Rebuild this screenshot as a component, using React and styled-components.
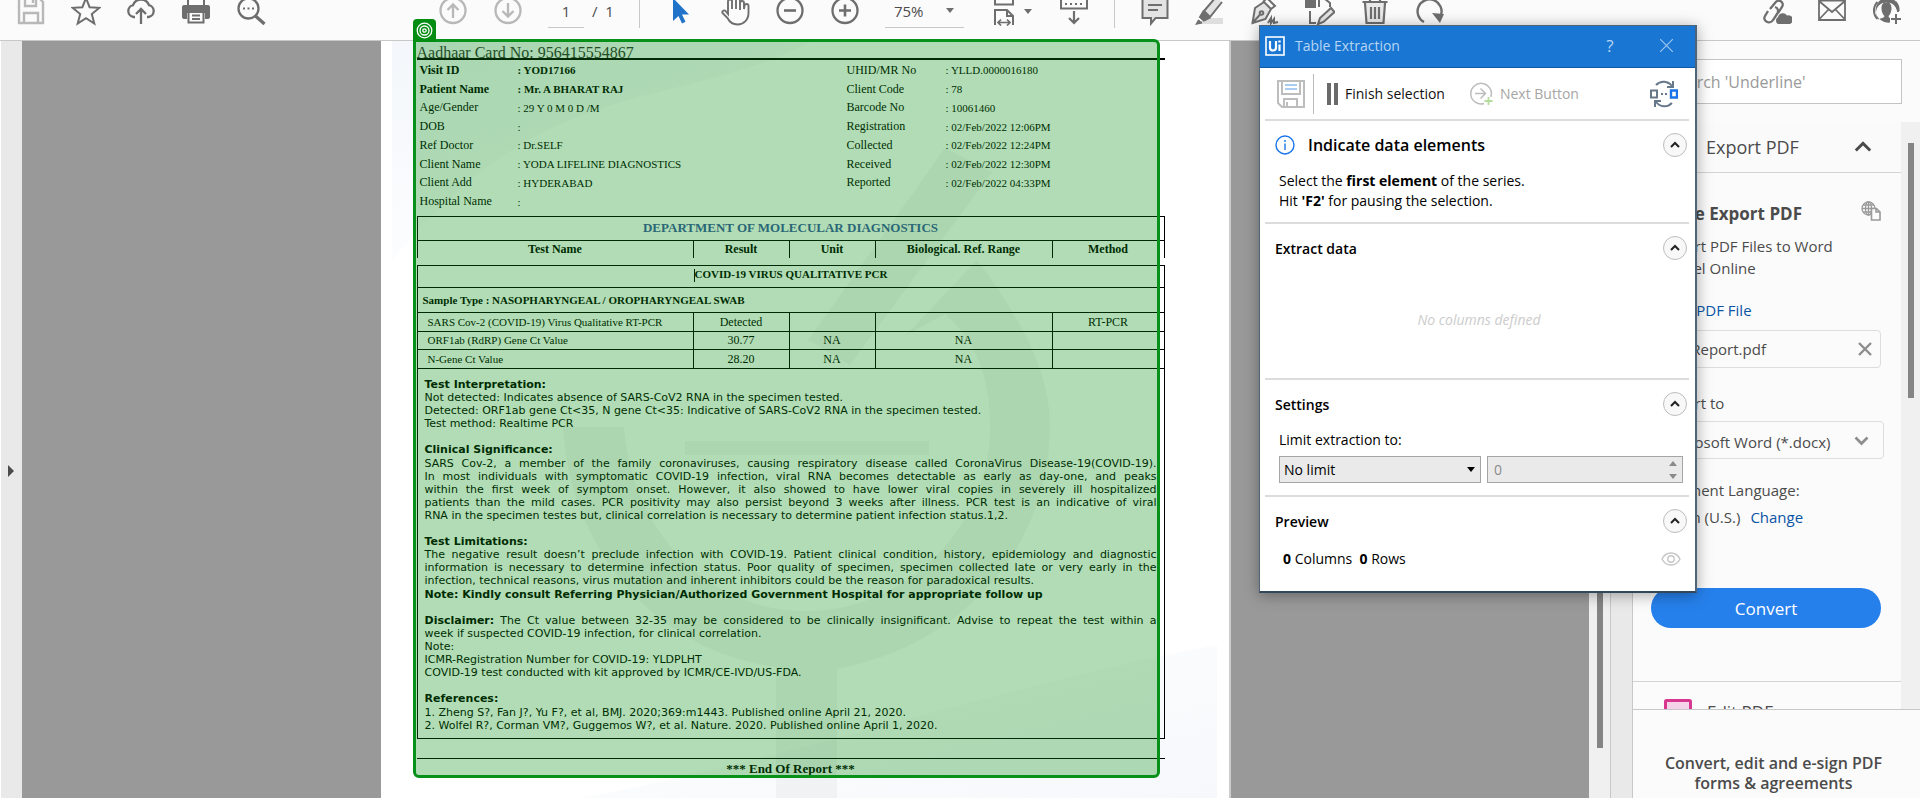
import React from "react";
import styled, { createGlobalStyle, css } from "styled-components";

const ui = '"Open Sans", "Noto Sans", sans-serif';
const serif = '"Liberation Serif", serif';

const GlobalStyle = createGlobalStyle`
  *, *::before, *::after { box-sizing: border-box; }
  body { margin: 0; background: #fbfbfb; font-family: ${ui}; color: #4b4b4b; }
  button, input, select { font: inherit; color: inherit; margin: 0; }
  button { padding: 0; border: 0; background: none; cursor: pointer; }
  svg { display: block; }
`;

/* ---------- application frame ---------- */

const Frame = styled.div`
  position: relative;
  display: flex;
  flex-direction: column;
  height: 100vh;
  overflow: hidden;
`;

const Toolbar = styled.header`
  display: flex;
  align-items: center;
  flex: none;
  height: 41px;
  padding: 0 18px 18px 16px;
  border-bottom: 1px solid #c8c8c8;
  background: #fbfbfb;
`;

const ToolGroup = styled.div`
  display: flex;
  align-items: center;
  gap: 25px;
  margin-left: ${(p) => p.$before || "0"};
`;

const ToolButton = styled.button`
  flex: none;
  width: 30px;
  height: 30px;
  color: ${(p) => (p.$muted ? "#b8b8b8" : "#6e6e6e")};
`;

const Divider = styled.span`
  width: 1px;
  height: 36px;
  margin-bottom: 2px;
  background: #c8c8c8;
`;

const PageField = styled.div`
  display: flex;
  align-items: center;
  gap: 8px;
  height: 34px;
  font-size: 15px;
  white-space: pre;
`;

const PageInput = styled.input`
  width: 36px;
  height: 34px;
  border: 0;
  border-bottom: 1px solid #c8c8c8;
  background: none;
  text-align: center;
`;

const ZoomField = styled.div`
  display: flex;
  align-items: center;
  width: 79px;
  height: 34px;
  border-bottom: 1px solid #c8c8c8;
`;

const ZoomSelect = styled.select`
  appearance: none;
  flex: 1;
  min-width: 0;
  padding: 0 0 0 9px;
  border: 0;
  background: none;
  font-size: 15px;
`;

const Caret = styled.span`
  width: 0;
  border: 4px solid transparent;
  border-top: 5px solid ${(p) => p.$color || "#6e6e6e"};
  border-bottom: 0;
  margin-right: ${(p) => p.$after || "0"};
`;

const SplitTool = styled.div`
  display: flex;
  align-items: center;
  gap: 5px;
`;

const Main = styled.main`
  display: flex;
  flex: 1;
  min-height: 0;
`;

const Rail = styled.div`
  flex: none;
  width: ${(p) => p.$width};
  border-left: 1px solid ${(p) => p.$edge};
  background: #e9e9e9;
`;

const RailToggle = styled.button`
  display: block;
  width: 100%;
  margin-top: 424px;
  padding-left: 6px;
`;

const Desk = styled.div`
  flex: 1;
  min-width: 0;
  display: flex;
  justify-content: center;
  background: #999;
`;

const Track = styled.div`
  flex: none;
  width: 21px;
  padding: 4px 7px 0 8px;
  background: #f0f0f0;
`;

const Thumb = styled.div`
  height: ${(p) => p.$length};
  background: #858585;
`;

/* ---------- report page ---------- */

const Sheet = styled.article`
  position: relative;
  width: 850px;
  padding: 6px 64px 0 36px;
  border-right: 2px solid #ccc;
  background: #fff;
  color: #000;
  font-family: ${serif};
  font-size: 12px;
`;

const Watermark = styled.svg`
  position: absolute;
  inset: 0;
`;

const Body = styled.div`
  position: relative;
`;

const CardNumber = styled.h1`
  margin: 0;
  border-bottom: 2px solid #000;
  font-size: 16px;
  font-weight: 400;
  line-height: 11px;
  color: #333;
`;

const Details = styled.dl`
  display: grid;
  grid-template-columns: 98px 329px 99px 1fr;
  grid-auto-rows: 1fr;
  align-items: center;
  height: 150px;
  margin: 1px 0 5px;
  padding-left: 3px;
`;

const Term = styled.dt`
  font-weight: ${(p) => (p.$strong ? 700 : 400)};
`;

const Detail = styled.dd`
  margin: 0;
  font-size: 11px;
  font-weight: ${(p) => (p.$strong ? 700 : 400)};
`;

const Results = styled.table`
  width: 100%;
  margin-top: ${(p) => p.$before || "0"};
  border-collapse: collapse;
  table-layout: fixed;
  line-height: 14px;
`;

const Column = styled.col`
  width: ${(p) => p.$width};
`;

const Row = styled.tr`
  height: ${(p) => p.$height};
`;

const cell = css`
  padding: 0;
  border: 1px solid #000;
  text-align: ${(p) => p.$align || "center"};
  padding-left: ${(p) => p.$indent || "0"};
`;

const HeadCell = styled.th`
  ${cell}
  border-bottom-width: 0;
`;

const DepartmentCell = styled.th`
  ${cell}
  padding-bottom: 2px;
  color: #3d57a6;
  font-size: 13px;
`;

const GroupCell = styled.th`
  ${cell}
  padding-bottom: ${(p) => p.$lift || "0"};
  font-size: 11px;
`;

const NameCell = styled.td`
  ${cell}
  font-size: 11px;
`;

const Cell = styled.td`
  ${cell}
`;

const TextCaret = styled.span`
  display: inline-block;
  width: 1px;
  height: 13px;
  background: #000;
  vertical-align: middle;
`;

const Notes = styled.section`
  padding: 9px 7px 6px;
  border: 1px solid #000;
  border-top: 0;
  font-family: "DejaVu Sans", sans-serif;
  font-size: 11px;
  line-height: 13px;
`;

const NoteBlock = styled.div`
  margin-bottom: ${(p) => (p.$last ? "0" : "13px")};
`;

const NoteTitle = styled.h2`
  margin: 0;
  padding-bottom: ${(p) => (p.$spaced ? "1px" : "0")};
  font-size: 11px;
  line-height: 13px;
`;

const Line = styled.p`
  margin: 0;
  height: 13px;
  white-space: nowrap;
  text-align-last: ${(p) => (p.$fill ? "justify" : "left")};
`;

const StrongLine = styled.p`
  margin: 0;
  padding-top: 1px;
  font-weight: 700;
`;

const Ending = styled.p`
  margin: 19px 0 0;
  padding-top: 2px;
  border-top: 1px solid #000;
  font-size: 13px;
  font-weight: 700;
  line-height: 16px;
  text-align: center;
`;

const Selection = styled.div`
  position: absolute;
  z-index: 1;
  top: -2px;
  left: 32px;
  width: 747px;
  height: 739px;
  border: 3px solid #07901a;
  border-radius: 0 6px 6px 6px;
  background: rgba(0, 140, 10, 0.3);
`;

const SelectionTab = styled.div`
  position: absolute;
  bottom: 100%;
  left: -3px;
  display: grid;
  place-items: center;
  width: 23px;
  height: 23px;
  border-radius: 4px 4px 0 0;
  background: #058c12;
`;

/* ---------- side panel ---------- */

const Side = styled.aside`
  display: flex;
  flex-direction: column;
  flex: none;
  width: 288px;
  border-left: 1px solid #c8c8c8;
  background: #fbfbfb;
  font-size: 15px;
`;

const SearchBox = styled.input`
  flex: none;
  height: 45px;
  margin: 18px 18px 18px;
  padding: 0 0 0 18px;
  border: 1px solid #c4c4c4;
  background: #fff;
  font-size: 16px;
  &::placeholder { color: #9a9a9a; opacity: 1; }
`;

const SideBody = styled.div`
  display: flex;
  flex: 1;
  min-height: 0;
  overflow: hidden;
`;

const Tools = styled.div`
  flex: 1;
  min-width: 0;
`;

const SideTrack = styled.div`
  flex: none;
  width: 19px;
  padding: 21px 6px 0 7px;
  background: #f0f0f0;
`;

const ToolHead = styled.button`
  display: flex;
  align-items: center;
  justify-content: space-between;
  width: 100%;
  height: 51px;
  padding: 0 29px 0 73px;
  border-bottom: 1px solid #d4d4d4;
  background: #fafafa;
  font-size: 18px;
`;

const ToolBody = styled.div`
  padding: 28px 20px 0 18px;
`;

const TitleRow = styled.div`
  display: flex;
  justify-content: space-between;
  height: 34px;
`;

const Title = styled.h2`
  margin: 0;
  font-size: 17px;
  line-height: 26px;
`;

const Text = styled.p`
  margin: 0;
  line-height: 22px;
  white-space: nowrap;
`;

const Link = styled.a`
  color: #0b55a5;
  text-decoration: none;
  line-height: 22px;
`;

const LinkRow = styled.p`
  margin: 20px 0 9px;
  line-height: 22px;
`;

const FileBox = styled.div`
  display: flex;
  align-items: center;
  justify-content: space-between;
  height: 38px;
  margin-bottom: 24px;
  padding: 0 8px 0 10px;
  border: 1px solid #ddd;
  border-radius: 4px;
`;

const FormatBox = styled.div`
  display: flex;
  align-items: center;
  height: 38px;
  margin: 7px -3px 20px 0;
  padding-right: 14px;
  border: 1px solid #ddd;
  border-radius: 4px;
`;

const FormatSelect = styled.select`
  appearance: none;
  flex: 1;
  min-width: 0;
  padding: 4px 0 0 12px;
  border: 0;
  background: none;
`;

const FieldLabel = styled.label`
  display: block;
  line-height: 22px;
`;

const Language = styled.p`
  display: flex;
  gap: 10px;
  margin: 5px 0 60px;
  line-height: 22px;
`;

const ConvertButton = styled.button`
  display: block;
  width: 100%;
  height: 40px;
  border-radius: 20px;
  background: #2680eb;
  color: #fff;
  font-size: 17px;
`;

const NextTool = styled.button`
  display: flex;
  align-items: flex-start;
  gap: 15px;
  width: 100%;
  height: 60px;
  margin-top: 53px;
  padding: 17px 0 0 31px;
  border-top: 1px solid #d4d4d4;
  font-size: 17px;
  line-height: 26px;
`;

const Promo = styled.footer`
  flex: none;
  height: 89px;
  padding: 43px 6px 0 0;
  border-top: 1px solid #c8c8c8;
  font-size: 16px;
  font-weight: 600;
  line-height: 20px;
  text-align: center;
`;

/* ---------- extraction dialog ---------- */

const Dialog = styled.section`
  position: absolute;
  z-index: 2;
  top: 25px;
  right: 223px;
  width: 438px;
  border: 1px solid #4f6478;
  border-bottom: 2px solid #33475a;
  border-right-width: 2px;
  background: #fff;
  color: #000;
  font-size: 14px;
  box-shadow: 0 2px 14px rgba(0, 0, 0, 0.35);
`;

const TitleBar = styled.header`
  display: flex;
  align-items: center;
  height: 42px;
  padding: 0 22px 2px 5px;
  border-bottom: 1px solid #0e5aa9;
  background: #1976d2;
  color: #b7d5f2;
`;

const DialogTitle = styled.h2`
  flex: 1;
  margin: 0 0 0 10px;
  font-size: 14px;
  font-weight: 400;
`;

const HelpButton = styled.button`
  width: 20px;
  margin-right: 40px;
  font-size: 17px;
`;

const Commands = styled.div`
  display: flex;
  align-items: center;
  height: 51px;
  padding: 0 17px;
`;

const CommandRule = styled.span`
  width: 1px;
  height: 40px;
  margin: 0 13px 0 8px;
  background: #bbb;
`;

const Command = styled.button`
  display: flex;
  align-items: center;
  gap: 7px;
  margin-right: ${(p) => p.$after || "0"};
  color: ${(p) => (p.$muted ? "#a6a6a6" : "#111")};
`;

const SwapButton = styled.button`
  margin-left: auto;
`;

const Section = styled.section`
  margin: 0 6px 0 5px;
  height: ${(p) => p.$height};
  padding: 10px 2px 0 10px;
  border-top: 2px solid #dcdcdc;
`;

const SectionHead = styled.header`
  display: flex;
  align-items: center;
  gap: 13px;
  height: 28px;
`;

const SectionTitle = styled.h3`
  flex: 1;
  margin: 0;
  font-size: ${(p) => p.$size || "14px"};
  font-weight: 600;
`;

const Collapse = styled.button`
  display: grid;
  place-items: center;
  width: 24px;
  height: 24px;
  border: 1px solid #bdbdbd;
  border-radius: 50%;
  background: #f8f8f8;
`;

const Hint = styled.p`
  margin: 12px 0 0 4px;
  line-height: 20px;
`;

const Empty = styled.p`
  margin: 48px 4px 0 0;
  color: #ccc;
  font-style: italic;
  line-height: 20px;
  text-align: center;
`;

const LimitLabel = styled.label`
  display: block;
  margin: 12px 0 6px 4px;
  line-height: 20px;
`;

const LimitRow = styled.div`
  display: flex;
  gap: 6px;
  margin: 0 3px 0 4px;
`;

const LimitBox = styled.div`
  display: flex;
  align-items: center;
  width: ${(p) => p.$width};
  height: 27px;
  padding: 0 5px 0 4px;
  border: 1px solid #a5a5a5;
  background: #eaeaea;
`;

const LimitSelect = styled.select`
  appearance: none;
  flex: 1;
  min-width: 0;
  padding: 0;
  border: 0;
  background: none;
`;

const LimitInput = styled.input`
  appearance: none;
  flex: 1;
  min-width: 0;
  padding: 0 0 0 2px;
  border: 0;
  background: none;
  color: #8a8a8a;
`;

const Counts = styled.div`
  display: flex;
  align-items: center;
  justify-content: space-between;
  margin: 12px 6px 0 8px;
  line-height: 24px;
  white-space: pre;
`;

/* ---------- icons ---------- */

const Icon = ({ children, w = 2, size = 30 }) => (
  <svg width={size} height={size} viewBox={`0 0 ${size} ${size}`} fill="none" stroke="currentColor" strokeWidth={w} aria-hidden="true">
    {children}
  </svg>
);

const Chevron = ({ down, color = "#222", size = 10, w = 2 }) => (
  <svg width={size} height={size} viewBox="0 0 10 10" fill="none" stroke={color} strokeWidth={w} aria-hidden="true">
    <path d={down ? "M1 3l4 4 4-4" : "M1 7l4-4 4 4"} />
  </svg>
);

const icons = {
  save: <Icon w={2.4}><path d="M3 2v25h24V6l-4-4H3zM9 2v8h11V2M8 27V17h14v10" /><path d="M17 3v4" /></Icon>,
  star: <Icon><path d="M15 2l3.600 9.200 9.800.6-7.600 6.200 2.500 9.600-8.300-5.400-8.300 5.400 2.500-9.600L1.600 11.800l9.800-.6z" /></Icon>,
  cloud: <Icon w={2.3}><path d="M9 21H7.500a6 6 0 0 1-.5-11.800A8.500 8.500 0 0 1 23 9.200 6 6 0 0 1 22.500 21H21M15 28V14M10 18l5-5 5 5" /></Icon>,
  print: (
    <Icon>
      <path d="M7 9V1h16v8" />
      <path fill="currentColor" stroke="none" d="M3 9h24a2 2 0 0 1 2 2v10a2 2 0 0 1-2 2h-3v-6H6v6H3a2 2 0 0 1-2-2V11a2 2 0 0 1 2-2z" />
      <path d="M7.500 16v10.500h15V16zM11 19.500h8M11 23h8" />
    </Icon>
  ),
  find: <Icon w={2.3}><circle cx="12.500" cy="12.500" r="10" /><path d="M19.500 20l9 8" strokeWidth="3.200" /><path d="M7 12.500h2M11.500 12.500h2M16 12.500h2" strokeWidth="2.200" /></Icon>,
  up: <Icon w={2.3}><circle cx="15" cy="14.500" r="12.500" /><path d="M15 22V8.500M9.500 14L15 8.500l5.500 5.500" /></Icon>,
  down: <Icon w={2.3}><circle cx="15" cy="14.500" r="12.500" /><path d="M15 7v13.500M9.500 15l5.500 5.500 5.500-5.500" /></Icon>,
  pointer: <Icon><path fill="#2073c9" stroke="none" d="M8 2v23l5.500-5 3.500 7.500 3.500-1.700-3.500-7.300h7z" /></Icon>,
  hand: <Icon w={1.9}><path d="M8 18V5.500a2 2 0 0 1 4 0V13 3.500a2 2 0 0 1 4 0V13 4a2 2 0 0 1 4 0v10-7a2 2 0 0 1 4 0V13l.5-3a2 2 0 0 1 4 0v7c0 7-5 11.500-11 11.500-5 0-8-2.500-10-6.500L2.500 17c-.8-2.500 2-3.500 3.500-1.500L8 18z" /></Icon>,
  minus: <Icon w={2.3}><circle cx="15" cy="14.500" r="12.500" /><path d="M9 14.500h12" strokeWidth="2.600" /></Icon>,
  plus: <Icon w={2.3}><circle cx="15" cy="14.500" r="12.500" /><path d="M9 14.500h12M15 8.500v12" strokeWidth="2.600" /></Icon>,
  fit: <Icon><path d="M6 0v8.500h18V0M6 29V14h12l6 6v9M18 14v6h6" /><path d="M9 26.500h12M12 23.500l-3 3 3 3M18 23.500l3 3-3 3" strokeWidth="1.700" /></Icon>,
  keys: <Icon><path d="M2 0v12.500h26V0" /><path d="M6 8h2M11 8h2M16 8h2M21 8h2M6 3h2M11 3h2M16 3h2M21 3h2M15 15v12M10 22l5 5 5-5" strokeWidth="2.200" /></Icon>,
  comment: <Icon><path fill="#e3e3e3" d="M2.500 2h25v20H15.500L11 27.500V22H2.500z" /><path d="M8 9h14M8 14h10" /></Icon>,
  highlight: <Icon><path fill="#dedede" stroke="none" d="M9 22h19v6H4z" /><path fill="#e3e3e3" d="M21 1L9 15l6 6L27 6" /><path fill="currentColor" d="M8 16l6 6-5 2.500-4-3.500z" /><path d="M4 24l-2 3.500 5-1" fill="currentColor" /></Icon>,
  sign: <Icon><path fill="#e3e3e3" d="M2.500 27L5 12l9-6 7 7-5.500 10L2.500 27zM2.500 27l8-9" /><circle cx="11.500" cy="17" r="1.800" /><path d="M13 6l4-4 8 8-4 3M18 27l3-5v5l3-4v4l4-1" /></Icon>,
  edit: <Icon><path fill="currentColor" d="M1 4h9v7H1z" /><path d="M14 11V3h6l5 4v4M5 15v12h6" /><path fill="#e3e3e3" d="M13 28l2-6 11-10 3.500 4-11 10-5.500 2z" /></Icon>,
  trash: <Icon w={2.2}><path fill="#e9e9e9" d="M5 7l1.500 20h17L25 7" /><path d="M2.500 6h25M10 6V2h10v4M11 11v12M15 11v12M19 11v12" /></Icon>,
  rotate: <Icon w={2.4}><path d="M9 26A12 12 0 1 1 26 19" /><path fill="currentColor" stroke="none" d="M17 17l12 1-4 9z" /></Icon>,
  share: <Icon w={2.3}><path d="M12 13l5-6c3-5 10-1 7 4l-4 6M17 11c3 1 4 4 2 7l-4 6c-3 5-11 1-8-4l3-5" transform="translate(-4 0)" /><path fill="currentColor" stroke="none" d="M16 28a4 4 0 0 1 0-7 5 5 0 0 1 9-1.500 4.500 4.500 0 0 1 3 8.500z" /></Icon>,
  mail: <Icon><path d="M2 4.500h26v19.500H2zM2 5l13 11L28 5M2 23.500l9.500-10M28 23.500l-9.500-10" strokeWidth="1.800" /></Icon>,
  user: (
    <Icon>
      <path
        fill="currentColor"
        stroke="none"
        fillRule="evenodd"
        d="M14.500 1.500a12.500 12.500 0 1 0 3.500 25v-4.500c-1-.4-1.400-1-1.400-2 4-4 4.400-14-2.100-14s-6.100 10-2.100 14c0 2-3.500 2-5.900 3.500a10.500 10.500 0 1 1 18.500-7.500H27A12.500 12.500 0 0 0 14.500 1.500z"
      />
      <path d="M5.500 23a12 12 0 0 1 0-17M23.500 6a12 12 0 0 1 3 9M24 18v10M19 23h10" />
    </Icon>
  ),
};

const Tool = ({ name, label, muted }) => (
  <ToolButton type="button" aria-label={label} $muted={muted}>{icons[name]}</ToolButton>
);

/* ---------- data ---------- */

const details = [
  ["Visit ID", "YOD17166", "UHID/MR No", "YLLD.0000016180", true],
  ["Patient Name", "Mr. A BHARAT RAJ", "Client Code", "78", true],
  ["Age/Gender", "29 Y 0 M 0 D /M", "Barcode No", "10061460"],
  ["DOB", "", "Registration", "02/Feb/2022 12:06PM"],
  ["Ref Doctor", "Dr.SELF", "Collected", "02/Feb/2022 12:24PM"],
  ["Client Name", "YODA LIFELINE DIAGNOSTICS", "Received", "02/Feb/2022 12:30PM"],
  ["Client Add", "HYDERABAD", "Reported", "02/Feb/2022 04:33PM"],
  ["Hospital Name", "", null, null],
];

const results = [
  ["19px", "SARS Cov-2 (COVID-19) Virus Qualitative RT-PCR", "Detected", "", "", "RT-PCR"],
  ["18px", "ORF1ab (RdRP) Gene Ct Value", "30.77", "NA", "NA", ""],
  ["19px", "N-Gene Ct Value", "28.20", "NA", "NA", ""],
];

const Columns = () => (
  <colgroup>
    <Column $width="276px" />
    <Column $width="96px" />
    <Column $width="86px" />
    <Column $width="177px" />
    <Column />
  </colgroup>
);

function Report() {
  return (
    <Sheet>
      <Watermark width="848" height="757" viewBox="0 0 848 757" aria-hidden="true">
        <defs>
          <linearGradient id="haze" x1="0" y1="0" x2="1" y2="1">
            <stop offset="0" stopColor="#fff" />
            <stop offset="1" stopColor="#f6f8fb" />
          </linearGradient>
          <linearGradient id="mist" x1="0" y1="0" x2="0.6" y2="1">
            <stop offset="0" stopColor="#f3f7fb" />
            <stop offset="1" stopColor="#fff" />
          </linearGradient>
        </defs>
        <path fill="url(#mist)" d="M11 0h420C300 70 160 30 11 220z" />
        <path fill="url(#haze)" d="M200 757C400 720 640 640 836 604v153z" />
        <g fill="#000" fillOpacity="0.03">
          <path d="M564 107l47 24-142 193-42-25z" />
          <path d="M596 219c40 52 73 110 73 165 0 120-85 220-213 244v132h-61V626C285 612 190 520 182 386h61c8 105 84 184 182 184 100 0 184-84 184-184 0-50-14-85-45-113l-40 22z" />
          <path d="M304 400h244v14H304z" />
        </g>
      </Watermark>
      <Body>
        <CardNumber>Aadhaar Card No: 956415554867</CardNumber>
        <Details>
          {details.map(([a, b, c, d, strong]) => (
            <React.Fragment key={a}>
              <Term $strong={strong}>{a}</Term>
              <Detail $strong={strong}>: {b}</Detail>
              {c && <Term>{c}</Term>}
              {c && <Detail>: {d}</Detail>}
            </React.Fragment>
          ))}
        </Details>
        <Results>
          <Columns />
          <thead>
            <Row $height="24px"><DepartmentCell colSpan={5}>DEPARTMENT OF MOLECULAR DIAGNOSTICS</DepartmentCell></Row>
            <Row $height="17px">
              {["Test Name", "Result", "Unit", "Biological. Ref. Range", "Method"].map((h) => (
                <HeadCell key={h}>{h}</HeadCell>
              ))}
            </Row>
          </thead>
        </Results>
        <Results $before="7px">
          <Columns />
          <tbody>
            <Row $height="22px"><GroupCell colSpan={5} $lift="3px"><TextCaret />COVID-19 VIRUS QUALITATIVE PCR</GroupCell></Row>
            <Row $height="25px"><GroupCell colSpan={5} $align="left" $indent="5px">Sample Type : NASOPHARYNGEAL / OROPHARYNGEAL SWAB</GroupCell></Row>
            {results.map(([h, name, ...rest]) => (
              <Row key={name} $height={h}>
                <NameCell $align="left" $indent="10px">{name}</NameCell>
                {rest.map((v, i) => <Cell key={i}>{v}</Cell>)}
              </Row>
            ))}
          </tbody>
        </Results>
        <Notes>
          <NoteBlock>
            <NoteTitle>Test Interpretation:</NoteTitle>
            <Line>Not detected: Indicates absence of SARS-CoV2 RNA in the specimen tested.</Line>
            <Line>Detected: ORF1ab gene Ct&lt;35, N gene Ct&lt;35: Indicative of SARS-CoV2 RNA in the specimen tested.</Line>
            <Line>Test method: Realtime PCR</Line>
          </NoteBlock>
          <NoteBlock>
            <NoteTitle $spaced>Clinical Significance:</NoteTitle>
            <Line $fill>SARS Cov-2, a member of the family coronaviruses, causing respiratory disease called CoronaVirus Disease-19(COVID-19).</Line>
            <Line $fill>In most individuals with symptomatic COVID-19 infection, viral RNA becomes detectable as early as day-one, and peaks</Line>
            <Line $fill>within the first week of symptom onset. However, it also showed to have lower viral copies in severely ill hospitalized</Line>
            <Line $fill>patients than the mild cases. PCR positivity may also persist beyond 3 weeks after illness. PCR test is an indicative of viral</Line>
            <Line>RNA in the specimen testes but, clinical correlation is necessary to determine patient infection status.1,2.</Line>
          </NoteBlock>
          <NoteBlock>
            <NoteTitle>Test Limitations:</NoteTitle>
            <Line $fill>The negative result doesn’t preclude infection with COVID-19. Patient clinical condition, history, epidemiology and diagnostic</Line>
            <Line $fill>information is necessary to determine infection status. Poor quality of specimen, specimen collected late or very early in the</Line>
            <Line>infection, technical reasons, virus mutation and inherent inhibitors could be the reason for paradoxical results.</Line>
            <StrongLine>Note: Kindly consult Referring Physician/Authorized Government Hospital for appropriate follow up</StrongLine>
          </NoteBlock>
          <NoteBlock>
            <Line $fill><strong>Disclaimer:</strong> The Ct value between 32-35 may be considered to be clinically insignificant. Advise to repeat the test within a</Line>
            <Line>week if suspected COVID-19 infection, for clinical correlation.</Line>
            <Line>Note:</Line>
            <Line>ICMR-Registration Number for COVID-19: YLDPLHT</Line>
            <Line>COVID-19 test conducted with kit approved by ICMR/CE-IVD/US-FDA.</Line>
          </NoteBlock>
          <NoteBlock $last>
            <NoteTitle $spaced>References:</NoteTitle>
            <Line>1. Zheng S?, Fan J?, Yu F?, et al, BMJ. 2020;369:m1443. Published online April 21, 2020.</Line>
            <Line>2. Wolfel R?, Corman VM?, Guggemos W?, et al. Nature. 2020. Published online April 1, 2020.</Line>
          </NoteBlock>
        </Notes>
        <Ending>*** End Of Report ***</Ending>
      </Body>
      <Selection>
        <SelectionTab>
          <svg width="17" height="17" viewBox="0 0 17 17" fill="none" stroke="#fff" strokeWidth="1.300" aria-hidden="true">
            <circle cx="8.500" cy="8.500" r="7.300" />
            <circle cx="8.500" cy="8.500" r="4.500" />
            <circle cx="8.500" cy="8.500" r="1.700" />
          </svg>
        </SelectionTab>
      </Selection>
    </Sheet>
  );
}

function SidePanel() {
  return (
    <Side>
      <SearchBox aria-label="Search tools" placeholder="Search 'Underline'" />
      <SideBody>
        <Tools>
          <ToolHead type="button">Export PDF<Chevron color="#4b4b4b" size={18} w={1.6} /></ToolHead>
          <ToolBody>
            <TitleRow>
              <Title>Adobe Export PDF</Title>
              <svg width="20" height="20" viewBox="0 0 20 20" fill="none" stroke="#9a9a9a" strokeWidth="1.300" aria-hidden="true">
                <circle cx="7.500" cy="7.500" r="6.500" />
                <ellipse cx="7.500" cy="7.500" rx="3" ry="6.500" />
                <path d="M1 7.500h13M2 4h11M2 11h11M7.500 1v13" />
                <path d="M10.500 7.500h5l3.500 3.500v8h-8.500zM15 7.500V11h4" fill="#fbfbfb" strokeWidth="1.600" />
              </svg>
            </TitleRow>
            <Text>Convert PDF Files to Word</Text>
            <Text>or Excel Online</Text>
            <LinkRow><Link href="#select">Select PDF File</Link></LinkRow>
            <FileBox>
              <span>Lab Report.pdf</span>
              <button type="button" aria-label="Remove file">
                <svg width="14" height="14" viewBox="0 0 14 14" stroke="#8e8e8e" strokeWidth="2.400" aria-hidden="true"><path d="M1 1l12 12M13 1L1 13" /></svg>
              </button>
            </FileBox>
            <FieldLabel htmlFor="format">Convert to</FieldLabel>
            <FormatBox>
              <FormatSelect id="format"><option>Microsoft Word (*.docx)</option></FormatSelect>
              <Chevron down color="#8e8e8e" size={15} w={1.8} />
            </FormatBox>
            <Text>Document Language:</Text>
            <Language>English (U.S.) <Link href="#language">Change</Link></Language>
            <ConvertButton type="button">Convert</ConvertButton>
          </ToolBody>
          <NextTool type="button">
            <svg width="28" height="28" viewBox="0 0 28 28" aria-hidden="true"><rect x="1.500" y="1.500" width="25" height="25" rx="1" fill="#f4d3e9" stroke="#d83790" strokeWidth="3" /></svg>
            Edit PDF
          </NextTool>
        </Tools>
        <SideTrack><Thumb $length="255px" /></SideTrack>
      </SideBody>
      <Promo>Convert, edit and e-sign PDF<br />forms &amp; agreements</Promo>
    </Side>
  );
}

const CollapseButton = ({ label }) => (
  <Collapse type="button" aria-label={`Collapse ${label}`}><Chevron /></Collapse>
);

function ExtractionDialog() {
  return (
    <Dialog role="dialog" aria-label="Table Extraction">
      <TitleBar>
        <svg width="20" height="20" viewBox="0 0 20 20" fill="none" stroke="#fff" aria-hidden="true">
          <rect x="1" y="1" width="18" height="18" strokeWidth="1.600" />
          <path d="M5 5v6.500a3 3 0 0 0 6 0V5M14.500 8.500V15" strokeWidth="2.200" />
          <path d="M14.500 4.500v2" strokeWidth="2.400" />
        </svg>
        <DialogTitle>Table Extraction</DialogTitle>
        <HelpButton type="button" aria-label="Help">?</HelpButton>
        <button type="button" aria-label="Close">
          <svg width="13" height="13" viewBox="0 0 13 13" stroke="#9fc6ee" strokeWidth="1.200" aria-hidden="true"><path d="M0 0l13 13M13 0L0 13" /></svg>
        </button>
      </TitleBar>
      <Commands>
        <Command type="button" aria-label="Save" $muted>
          <svg width="28" height="28" viewBox="0 0 28 28" fill="none" stroke="#bdbdbd" strokeWidth="2" aria-hidden="true">
            <path d="M1 1h26v26H5l-4-4zM5 1v13h18V1M7 27v-8h13v8M10 22v5" />
            <path d="M8 5h12M8 9h12" stroke="#a9cdf2" />
          </svg>
        </Command>
        <CommandRule />
        <Command type="button" $after="24px">
          <svg width="11" height="22" viewBox="0 0 11 22" fill="#6a6a6a" aria-hidden="true"><path d="M0 0h4v22H0zM7 0h4v22H7z" /></svg>
          Finish selection
        </Command>
        <Command type="button" $muted>
          <svg width="24" height="24" viewBox="0 0 24 24" fill="none" stroke="#bdbdbd" strokeWidth="1.500" aria-hidden="true">
            <path d="M15 21.500A10.300 10.300 0 1 1 21.800 15M6 11.500h10M11.500 6.500l5 5-5 5" />
            <path d="M19.500 15v8M15.500 19h8" stroke="#b5dc9c" strokeWidth="1.800" />
          </svg>
          Next Button
        </Command>
        <SwapButton type="button" aria-label="Change selection">
          <svg width="28" height="28" viewBox="0 0 28 28" fill="none" stroke="#66788a" strokeWidth="2" aria-hidden="true">
            <path d="M1 10.500h6v7H1z" />
            <path d="M21 10.500h6v7h-6z" stroke="#1a73e8" strokeWidth="2.400" />
            <path d="M11 14h2M15 14h2M6 5c5-5 12-4 16 1M22 23c-5 5-12 4-16-1" />
            <path d="M23 1v6h-6M5 27v-6h6" />
          </svg>
        </SwapButton>
      </Commands>
      <Section $height="103px">
        <SectionHead>
          <svg width="20" height="20" viewBox="0 0 20 20" fill="none" stroke="#1976e8" strokeWidth="1.400" aria-hidden="true">
            <circle cx="10" cy="10" r="9" /><path d="M10 8.500V15M10 5v2" />
          </svg>
          <SectionTitle $size="16px">Indicate data elements</SectionTitle>
          <CollapseButton label="Indicate data elements" />
        </SectionHead>
        <Hint>Select the <b>first element</b> of the series.<br />Hit <b>'F2'</b> for pausing the selection.</Hint>
      </Section>
      <Section $height="156px">
        <SectionHead><SectionTitle>Extract data</SectionTitle><CollapseButton label="Extract data" /></SectionHead>
        <Empty>No columns defined</Empty>
      </Section>
      <Section $height="117px">
        <SectionHead><SectionTitle>Settings</SectionTitle><CollapseButton label="Settings" /></SectionHead>
        <LimitLabel htmlFor="limit">Limit extraction to:</LimitLabel>
        <LimitRow>
          <LimitBox $width="202px">
            <LimitSelect id="limit"><option>No limit</option></LimitSelect>
            <Caret $color="#000" />
          </LimitBox>
          <LimitBox $width="196px">
            <LimitInput aria-label="Limit value" defaultValue="0" disabled />
            <svg width="8" height="18" viewBox="0 0 8 18" fill="#8a8a8a" aria-hidden="true"><path d="M4 0l4 5H0zM4 18l4-5H0z" /></svg>
          </LimitBox>
        </LimitRow>
      </Section>
      <Section $height="96px">
        <SectionHead><SectionTitle>Preview</SectionTitle><CollapseButton label="Preview" /></SectionHead>
        <Counts>
          <span><b>0</b> Columns  <b>0</b> Rows</span>
          <button type="button" aria-label="Show preview">
            <svg width="20" height="14" viewBox="0 0 20 14" fill="none" stroke="#c6c6c6" strokeWidth="1.400" aria-hidden="true">
              <path d="M1 7c4-8 14-8 18 0-4 8-14 8-18 0z" /><circle cx="10" cy="7" r="3.200" />
            </svg>
          </button>
        </Counts>
      </Section>
    </Dialog>
  );
}

export default function App() {
  return (
    <Frame>
      <GlobalStyle />
      <Toolbar>
        <ToolGroup>
          <Tool name="save" label="Save" muted />
          <Tool name="star" label="Favourite" />
          <Tool name="cloud" label="Upload" />
          <Tool name="print" label="Print" />
          <Tool name="find" label="Find" />
        </ToolGroup>
        <ToolGroup $before="172px">
          <Tool name="up" label="Previous page" muted />
          <Tool name="down" label="Next page" muted />
          <PageField>
            <PageInput aria-label="Page number" defaultValue="1" />
            <span>/  1</span>
          </PageField>
          <Divider />
          <Tool name="pointer" label="Select" />
          <Tool name="hand" label="Pan" />
          <Tool name="minus" label="Zoom out" />
          <Tool name="plus" label="Zoom in" />
          <ZoomField>
            <ZoomSelect aria-label="Zoom"><option>75%</option></ZoomSelect>
            <Caret $after="10px" />
          </ZoomField>
          <SplitTool><Tool name="fit" label="Page display" /><Caret $after="2px" /></SplitTool>
          <Tool name="keys" label="Scroll mode" />
          <Divider />
          <Tool name="comment" label="Comment" />
          <Tool name="highlight" label="Highlight" />
          <Tool name="sign" label="Sign" />
          <Tool name="edit" label="Edit" />
          <Tool name="trash" label="Delete" />
          <Tool name="rotate" label="Rotate" />
        </ToolGroup>
        <ToolGroup $before="auto">
          <Tool name="share" label="Share link" />
          <Tool name="mail" label="Email" />
          <Tool name="user" label="Add people" />
        </ToolGroup>
      </Toolbar>
      <Main>
        <Rail $width="22px" $edge="#fff">
          <RailToggle type="button" aria-label="Show navigation pane">
            <svg width="8" height="12" viewBox="0 0 8 12" fill="#4b4b4b" aria-hidden="true"><path d="M1 0l6 6-6 6z" /></svg>
          </RailToggle>
        </Rail>
        <Desk><Report /></Desk>
        <Track><Thumb $length="703px" /></Track>
        <Rail $width="22px" $edge="#c8c8c8" />
        <SidePanel />
      </Main>
      <ExtractionDialog />
    </Frame>
  );
}
